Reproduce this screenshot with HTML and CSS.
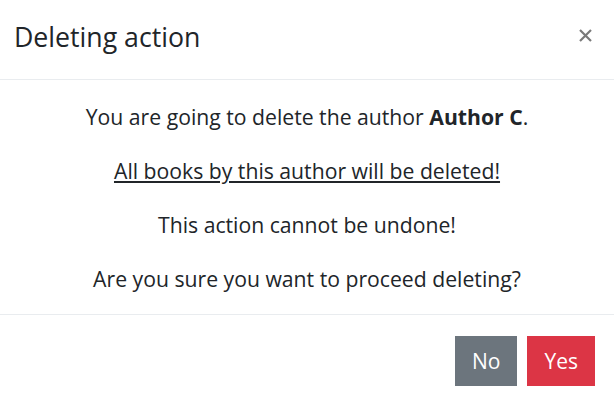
FILE: index.html
```html
<!DOCTYPE html>
<html>
<head>
<meta charset="utf-8">
<link rel="stylesheet" href="styles.css">
</head>
<body>
<div class="modal">
  <div class="modal-header">
    <h5 class="modal-title">Deleting action</h5>
    <button class="close" type="button" aria-label="Close">
      <svg width="13" height="13" viewBox="0 0 13 13"><path d="M1 1 L12 12 M12 1 L1 12" stroke="#7a7a7a" stroke-width="2.2" fill="none"/></svg>
    </button>
  </div>
  <div class="modal-body">
    <p>You are going to delete the author <b>Author C</b>.</p>
    <p><u>All books by this author will be deleted!</u></p>
    <p>This action cannot be undone!</p>
    <p>Are you sure you want to proceed deleting?</p>
  </div>
  <div class="modal-footer">
    <button class="btn btn-secondary" type="button">No</button>
    <button class="btn btn-danger" type="button">Yes</button>
  </div>
</div>
</body>
</html>
```
FILE: styles.css
```css
html, body {
  margin: 0;
  padding: 0;
  background: #fff;
}
body {
  font-family: "Open Sans", "Liberation Sans", sans-serif;
  color: #212529;
  width: 614px;
  height: 401px;
  overflow: hidden;
}
.modal {
  display: flex;
  flex-direction: column;
  height: 401px;
}
.modal-header {
  height: 79px;
  flex: none;
  box-sizing: content-box;
  display: flex;
  align-items: center;
  justify-content: space-between;
  padding: 0 22px 0 14px;
  border-bottom: 1px solid #e9ecef;
}
.modal-title {
  margin: 0;
  font-size: 26.7px;
  font-weight: 400;
  line-height: 1.5;
  color: #212529;
  position: relative;
  top: -2px;
}
.close {
  border: 0;
  background: transparent;
  padding: 0;
  width: 13px;
  height: 13px;
  display: flex;
  position: relative;
  top: -4px;
}
.modal-body {
  flex: 1;
  min-height: 0;
  padding: 21px 16px 0;
  text-align: center;
  font-size: 21.2px;
  line-height: 31.5px;
}
.modal-body p {
  margin: 0 0 22.5px;
}
.modal-body p:last-child {
  margin-bottom: 0;
}
.modal-body b {
  font-weight: 700;
}
.modal-footer {
  height: 87px;
  flex: none;
  box-sizing: border-box;
  border-top: 1px solid #e9ecef;
  display: flex;
  justify-content: flex-end;
  align-items: flex-start;
  padding: 21px 19px 0 0;
  gap: 10px;
}
.btn {
  border: 0;
  border-radius: 0;
  font-family: "Open Sans", sans-serif;
  font-size: 21px;
  line-height: 31px;
  height: 50px;
  padding: 0 17px;
  color: #fff;
}
.btn-secondary { background: #6c757d; }
.btn-danger { background: #dc3545; }
```
